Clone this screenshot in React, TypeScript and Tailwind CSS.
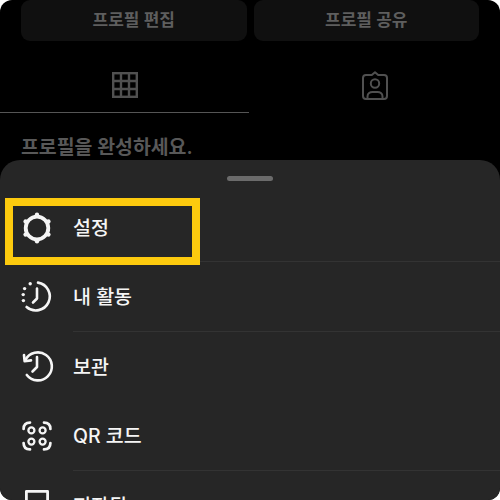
import type { ReactNode } from "react";

const font = "font-['Inter','Noto_Sans_CJK_KR',sans-serif]";

function GearIcon() {
  const bumps = [
    [18, 4.8],
    [29.4, 11.4],
    [29.4, 24.6],
    [18, 31.2],
    [6.6, 24.6],
    [6.6, 11.4],
  ];
  return (
    <svg width="36" height="36" viewBox="0 0 36 36" fill="none">
      <circle cx="18" cy="18" r="11.3" stroke="#f5f5f5" strokeWidth="3.8" />
      {bumps.map(([x, y], i) => (
        <circle key={i} cx={x} cy={y} r="2.2" fill="#f5f5f5" />
      ))}
    </svg>
  );
}

function ActivityIcon() {
  return (
    <svg width="36" height="36" viewBox="0 0 36 36" fill="none" stroke="#f5f5f5" strokeWidth="2.6" strokeLinecap="round" strokeLinejoin="round">
      <path d="M19 3.6A14 14 0 1 1 7.6 28" />
      <path d="M18 9.5V19.5L14 23.5" />
      <circle cx="11.2" cy="4.8" r="1.7" fill="#f5f5f5" stroke="none" />
      <circle cx="5.6" cy="9.6" r="1.7" fill="#f5f5f5" stroke="none" />
      <circle cx="4.2" cy="15.6" r="1.7" fill="#f5f5f5" stroke="none" />
      <circle cx="4.4" cy="21.6" r="1.7" fill="#f5f5f5" stroke="none" />
    </svg>
  );
}

function ArchiveIcon() {
  return (
    <svg width="36" height="36" viewBox="0 0 36 36" fill="none" stroke="#f5f5f5" strokeWidth="2.6" strokeLinecap="round" strokeLinejoin="round">
      <path d="M6.4 12A14 14 0 1 1 7.8 27" />
      <path d="M5 7L5.6 13.2L12 12.4" />
      <path d="M18 9V19L13.5 23.5" />
    </svg>
  );
}

function QrIcon() {
  return (
    <svg width="36" height="36" viewBox="0 0 36 36" fill="none" stroke="#f5f5f5" strokeWidth="2.7" strokeLinecap="round">
      <path d="M4.6 11C4.6 6.4 6.6 4.6 11 4.6" />
      <path d="M25 4.6C29.4 4.6 31.4 6.4 31.4 11" />
      <path d="M31.4 25C31.4 29.6 29.4 31.4 25 31.4" />
      <path d="M11 31.4C6.6 31.4 4.6 29.6 4.6 25" />
      <circle cx="12.4" cy="12.4" r="3" strokeWidth="2.3" />
      <circle cx="23.6" cy="12.4" r="3" strokeWidth="2.3" />
      <circle cx="12.4" cy="23.6" r="3" strokeWidth="2.3" />
      <circle cx="23.6" cy="23.6" r="3" strokeWidth="2.3" />
    </svg>
  );
}

function SavedIcon() {
  return (
    <svg width="36" height="36" viewBox="0 0 36 36" fill="none" stroke="#f5f5f5" strokeWidth="2.8" strokeLinejoin="round">
      <path d="M7.4 4.4H28.6V31L18 22L7.4 31Z" />
    </svg>
  );
}

function GridIcon() {
  return (
    <svg width="26" height="26" viewBox="0 0 26 26" fill="none" stroke="#505050" strokeWidth="2.4">
      <rect x="1.2" y="1.2" width="23.6" height="23.6" />
      <path d="M9 1V25M17 1V25M1 9H25M1 17H25" />
    </svg>
  );
}

function TaggedIcon() {
  return (
    <svg width="30" height="30" viewBox="0 0 30 30" fill="none" stroke="#505050" strokeWidth="2" strokeLinejoin="round">
      <path d="M6 4H11.8L15 1.2L18.2 4H24A3 3 0 0 1 27 7V25A3 3 0 0 1 24 28H6A3 3 0 0 1 3 25V7A3 3 0 0 1 6 4Z" />
      <circle cx="15" cy="12.5" r="4.2" />
      <path d="M7.5 27.5V25.5C7.5 22.5 10 21 12.5 21H17.5C20 21 22.5 22.5 22.5 25.5V27.5" />
    </svg>
  );
}

function MenuRow({ icon, label, divider }: { icon: ReactNode; label: string; divider?: boolean }) {
  return (
    <div className="flex h-[69.4px] shrink-0 items-stretch">
      <div className="flex w-[73px] shrink-0 items-center pl-[19px]">{icon}</div>
      <div className={`flex flex-1 items-center pt-[2px] text-[19.5px] font-medium text-[#f5f5f5] ${divider ? "border-b border-[#333333]" : ""}`}>
        {label}
      </div>
    </div>
  );
}

export default function App() {
  return (
    <div className={`h-[500px] w-[500px] overflow-hidden bg-white ${font}`}>
      <div className="flex h-full flex-col overflow-hidden rounded-[12px] bg-black">
        {/* 뒤쪽 프로필 화면 */}
        <div className="h-[160px] shrink-0">
          <div className="flex gap-[7px] px-[21px]">
            <div className="flex h-[41px] flex-1 items-center justify-center rounded-[9px] bg-[#101010] text-[17px] font-semibold text-[#5e5e5e]">
              프로필 편집
            </div>
            <div className="flex h-[41px] flex-1 items-center justify-center rounded-[9px] bg-[#101010] text-[17px] font-semibold text-[#5e5e5e]">
              프로필 공유
            </div>
          </div>
          <div className="flex h-[72px]">
            <div className="flex w-[249px] items-center justify-center border-b border-[#555555] pt-[16px]">
              <GridIcon />
            </div>
            <div className="flex flex-1 items-center justify-center pt-[17px]">
              <TaggedIcon />
            </div>
          </div>
          <div className="pl-[21px] pt-[20px] text-[19.4px] leading-[28px] font-semibold text-[#585858]">프로필을 완성하세요.</div>
        </div>

        {/* 바텀 시트 */}
        <div className="relative flex-1 rounded-t-[20px] bg-[#262626]">
          <div className="mx-auto mt-[16px] h-[5px] w-[46px] rounded-full bg-[#6b6b6b]" />
          <div className="mt-[12px] flex flex-col">
            <MenuRow icon={<GearIcon />} label="설정" divider />
            <MenuRow icon={<ActivityIcon />} label="내 활동" divider />
            <MenuRow icon={<ArchiveIcon />} label="보관" />
            <MenuRow icon={<QrIcon />} label="QR 코드" divider />
            <MenuRow icon={<SavedIcon />} label="저장됨" />
          </div>
          <div className="absolute left-[5px] top-[38px] h-[67px] w-[195px] border-[8px] border-[#fdca0e]" />
        </div>
      </div>
    </div>
  );
}
